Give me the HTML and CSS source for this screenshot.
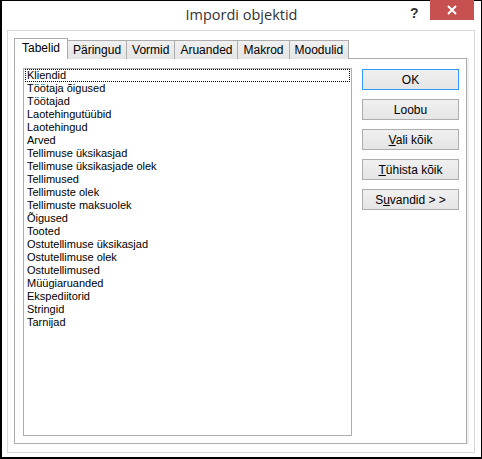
FILE: index.html
```html
<!DOCTYPE html>
<html lang="et">
<head>
  <meta charset="UTF-8" />
  <title>Impordi objektid</title>
  <link rel="stylesheet" href="styles.css">
</head>
<body>
  <div class="window">
    <div class="titlebar">
      <span class="title">Impordi objektid</span>
      <span class="help">?</span>
      <span class="close">
        <svg width="10" height="10" viewBox="0 0 10 10">
          <path d="M1 1L9 9M9 1L1 9" stroke="#fff" stroke-width="2" />
        </svg>
      </span>
    </div>

    <div class="frame">
      <!-- Onglets -->
      <ul class="tabs">
        <li class="tab active">Tabelid</li>
        <li class="tab">Päringud</li>
        <li class="tab">Vormid</li>
        <li class="tab">Aruanded</li>
        <li class="tab">Makrod</li>
        <li class="tab">Moodulid</li>
      </ul>

      <div class="panel">
        <ul class="list">
          <li class="focus">Kliendid</li>
          <li>Töötaja õigused</li>
          <li>Töötajad</li>
          <li>Laotehingutüübid</li>
          <li>Laotehingud</li>
          <li>Arved</li>
          <li>Tellimuse üksikasjad</li>
          <li>Tellimuse üksikasjade olek</li>
          <li>Tellimused</li>
          <li>Tellimuste olek</li>
          <li>Tellimuste maksuolek</li>
          <li>Õigused</li>
          <li>Tooted</li>
          <li>Ostutellimuse üksikasjad</li>
          <li>Ostutellimuse olek</li>
          <li>Ostutellimused</li>
          <li>Müügiaruanded</li>
          <li>Ekspediitorid</li>
          <li>Stringid</li>
          <li>Tarnijad</li>
        </ul>

        <div class="buttons">
          <button class="btn default">OK</button>
          <button class="btn">Loobu</button>
          <button class="btn"><u>V</u>ali kõik</button>
          <button class="btn"><u>T</u>ühista kõik</button>
          <button class="btn">S<u>u</u>vandid &gt; &gt;</button>
        </div>
      </div>
    </div>
  </div>
</body>
</html>
```

FILE: styles.css
```css
* {
  margin: 0;
  padding: 0;
  box-sizing: border-box;
}

body {
  background: #fff;
  font-family: 'Liberation Sans', Arial, sans-serif;
  color: #000;
}

.window {
  width: 482px;
  height: 459px;
  background: #fff;
  border: 1px solid #000;
  border-left-width: 2px;
  border-bottom-width: 2px;
  display: flex;
  flex-direction: column;
}

/* Barre de titre */
.titlebar {
  height: 29px;
  position: relative;
}

.title {
  position: absolute;
  left: 0;
  right: 0;
  top: 4px;
  text-align: center;
  font-size: 14.5px;
  color: #333;
  font-family: 'Open Sans', sans-serif;
}

.help {
  position: absolute;
  left: 408px;
  top: 4px;
  font-weight: bold;
  font-size: 14px;
  color: #333;
}

.close {
  position: absolute;
  left: 428px;
  top: -1px;
  width: 44px;
  height: 20px;
  background: #c75050;
  display: flex;
  justify-content: center;
  align-items: center;
}

/* Cadre principal */
.frame {
  flex: 1;
  margin: 0 6px 4px 5px;
  border: 1px solid #d9d9d9;
  padding: 7px 7px 8px 6px;
  display: flex;
  flex-direction: column;
}

.tabs {
  list-style: none;
  display: flex;
  align-items: flex-end;
  height: 21px;
  position: relative;
  z-index: 1;
  margin-bottom: -1px;
}

.tab {
  height: 19px;
  border: 1px solid #acacac;
  border-bottom: none;
  margin-left: -1px;
  padding: 2px 5px 0;
  font-size: 12px;
  background: linear-gradient(#f0f0f0, #e5e5e5);
}

.tab:first-child {
  margin-left: 0;
}

.tab.active {
  height: 21px;
  background: #fff;
  padding: 2px 7px 0;
}

.panel {
  flex: 1;
  border: 1px solid #acacac;
  background: #fff;
  box-shadow: 2px 0 0 #f0f0f0;
  padding: 9px 7px 7px 8px;
  display: flex;
  gap: 10px;
}

.list {
  list-style: none;
  width: 329px;
  height: 368px;
  border: 1px solid #adadad;
  padding: 0 1px;
  font-size: 11px;
  line-height: 13px;
}

.list li {
  padding-left: 2px;
  height: 13px;
  white-space: nowrap;
}

.list li.focus {
  outline: 1px dotted #000;
  outline-offset: -1px;
}

/* Boutons */
.buttons {
  display: flex;
  flex-direction: column;
  gap: 9px;
  margin-top: 1px;
}

.btn {
  width: 97px;
  height: 21px;
  border: 1px solid #adadad;
  background: linear-gradient(#f0f0f0, #e5e5e5);
  font-family: 'Liberation Sans', Arial, sans-serif;
  font-size: 12px;
  color: #000;
}

.btn.default {
  border-color: #3399ff;
}
```
